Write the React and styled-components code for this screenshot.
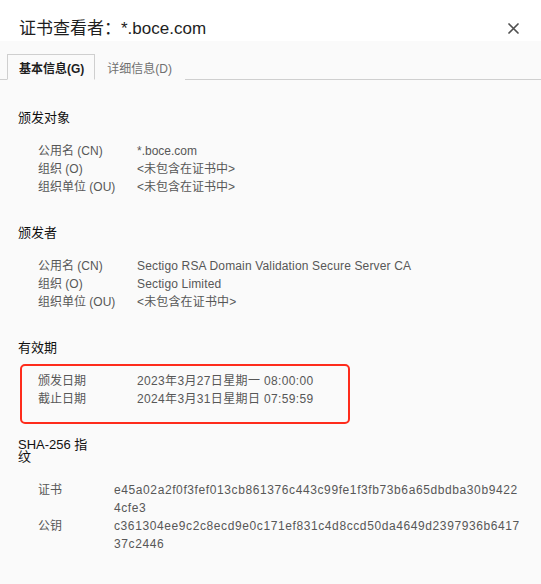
import React from "react";
import styled, { createGlobalStyle } from "styled-components";

const GlobalStyle = createGlobalStyle`
  html, body {
    margin: 0;
    padding: 0;
    background: #fafafa;
  }
  body {
    font-family: "Liberation Sans", "Noto Sans CJK SC", sans-serif;
    -webkit-font-smoothing: antialiased;
  }
`;

const Dialog = styled.div`
  width: 541px;
  min-height: 584px;
  background: #fafafa;
`;

const Header = styled.header`
  height: 41px;
  background: #fff;
  display: flex;
  align-items: flex-start;
  justify-content: space-between;
  padding: 18px 22px 0 19px;
  box-sizing: border-box;
`;

const Title = styled.h1`
  margin: 0;
  font-size: 17px;
  line-height: 21px;
  font-weight: 400;
  color: #1e1e1e;
`;

const CloseButton = styled.button`
  border: 0;
  background: none;
  padding: 0;
  margin-top: 5px;
  width: 11px;
  height: 11px;
  display: flex;
  cursor: pointer;
`;

const TabBar = styled.div`
  display: flex;
  padding: 13px 0 0 7px;
  border-bottom: 1px solid #cfcfcf;
`;

const Tab = styled.div`
  height: 26px;
  box-sizing: border-box;
  padding: 0 ${p => (p.$active ? "10px" : "12px")} 0 11px;
  margin-bottom: -1px;
  display: flex;
  align-items: center;
  font-size: 12px;
  font-weight: ${p => (p.$active ? 700 : 400)};
  color: ${p => (p.$active ? "#1e1e1e" : "#707070")};
  background: #fafafa;
  border: 1px solid ${p => (p.$active ? "#cfcfcf" : "transparent")};
  border-bottom-color: ${p => (p.$active ? "#fafafa" : "transparent")};
`;

const Content = styled.main`
  padding: 32px 18px 30px;
`;

const Section = styled.section`
  & + & {
    margin-top: 31px;
  }
`;

const Heading = styled.h2`
  margin: 0 0 18px;
  width: 74px;
  font-size: 13px;
  line-height: 12px;
  font-weight: 400;
  color: #111;
`;

const RowGroup = styled.div`
  padding-left: 20px;
  ${p =>
    p.$highlight &&
    `
    width: 330px;
    box-sizing: border-box;
    margin: -8px 0 -16px 2px;
    padding: 6px 0 14px 16px;
    border: 2px solid #fe2c1c;
    border-radius: 5px;
  `}
`;

const Row = styled.div`
  display: grid;
  grid-template-columns: ${p => p.$labelWidth}px ${p => p.$valueWidth || "auto"};
  font-size: 12px;
  line-height: 18px;
  color: #575757;
`;

const Value = styled.span`
  letter-spacing: ${p => p.$spacing || "normal"};
  word-break: ${p => (p.$hex ? "break-all" : "normal")};
`;

const sections = [
  {
    title: "颁发对象",
    rows: [
      ["公用名 (CN)", "*.boce.com"],
      ["组织 (O)", "<未包含在证书中>"],
      ["组织单位 (OU)", "<未包含在证书中>"],
    ],
  },
  {
    title: "颁发者",
    spacing: "0.15px",
    rows: [
      ["公用名 (CN)", "Sectigo RSA Domain Validation Secure Server CA"],
      ["组织 (O)", "Sectigo Limited"],
      ["组织单位 (OU)", "<未包含在证书中>"],
    ],
  },
  {
    title: "有效期",
    highlight: true,
    spacing: "0.35px",
    rows: [
      ["颁发日期", "2023年3月27日星期一 08:00:00"],
      ["截止日期", "2024年3月31日星期日 07:59:59"],
    ],
  },
  {
    title: "SHA-256 指纹",
    hex: true,
    spacing: "0.6px",
    rows: [
      ["证书", "e45a02a2f0f3fef013cb861376c443c99fe1f3fb73b6a65dbdba30b94224cfe3"],
      ["公钥", "c361304ee9c2c8ecd9e0c171ef831c4d8ccd50da4649d2397936b641737c2446"],
    ],
  },
];

const CloseIcon = () => (
  <svg width="11" height="11" viewBox="0 0 11 11">
    <path d="M1 1L10 10M10 1L1 10" stroke="#505050" strokeWidth="1.7" strokeLinecap="round" />
  </svg>
);

export default function App() {
  return (
    <>
      <GlobalStyle />
      <Dialog>
        <Header>
          <Title>证书查看者：*.boce.com</Title>
          <CloseButton aria-label="关闭">
            <CloseIcon />
          </CloseButton>
        </Header>
        <TabBar>
          <Tab $active>基本信息(G)</Tab>
          <Tab>详细信息(D)</Tab>
        </TabBar>
        <Content>
          {sections.map(s => (
            <Section key={s.title}>
              <Heading>{s.title}</Heading>
              <RowGroup $highlight={s.highlight}>
                {s.rows.map(([label, value]) => (
                  <Row
                    key={label}
                    $labelWidth={s.hex ? 76 : 99}
                    $valueWidth={s.hex ? "406px" : "auto"}
                  >
                    <span>{label}</span>
                    <Value $hex={s.hex} $spacing={s.spacing}>
                      {value}
                    </Value>
                  </Row>
                ))}
              </RowGroup>
            </Section>
          ))}
        </Content>
      </Dialog>
    </>
  );
}
